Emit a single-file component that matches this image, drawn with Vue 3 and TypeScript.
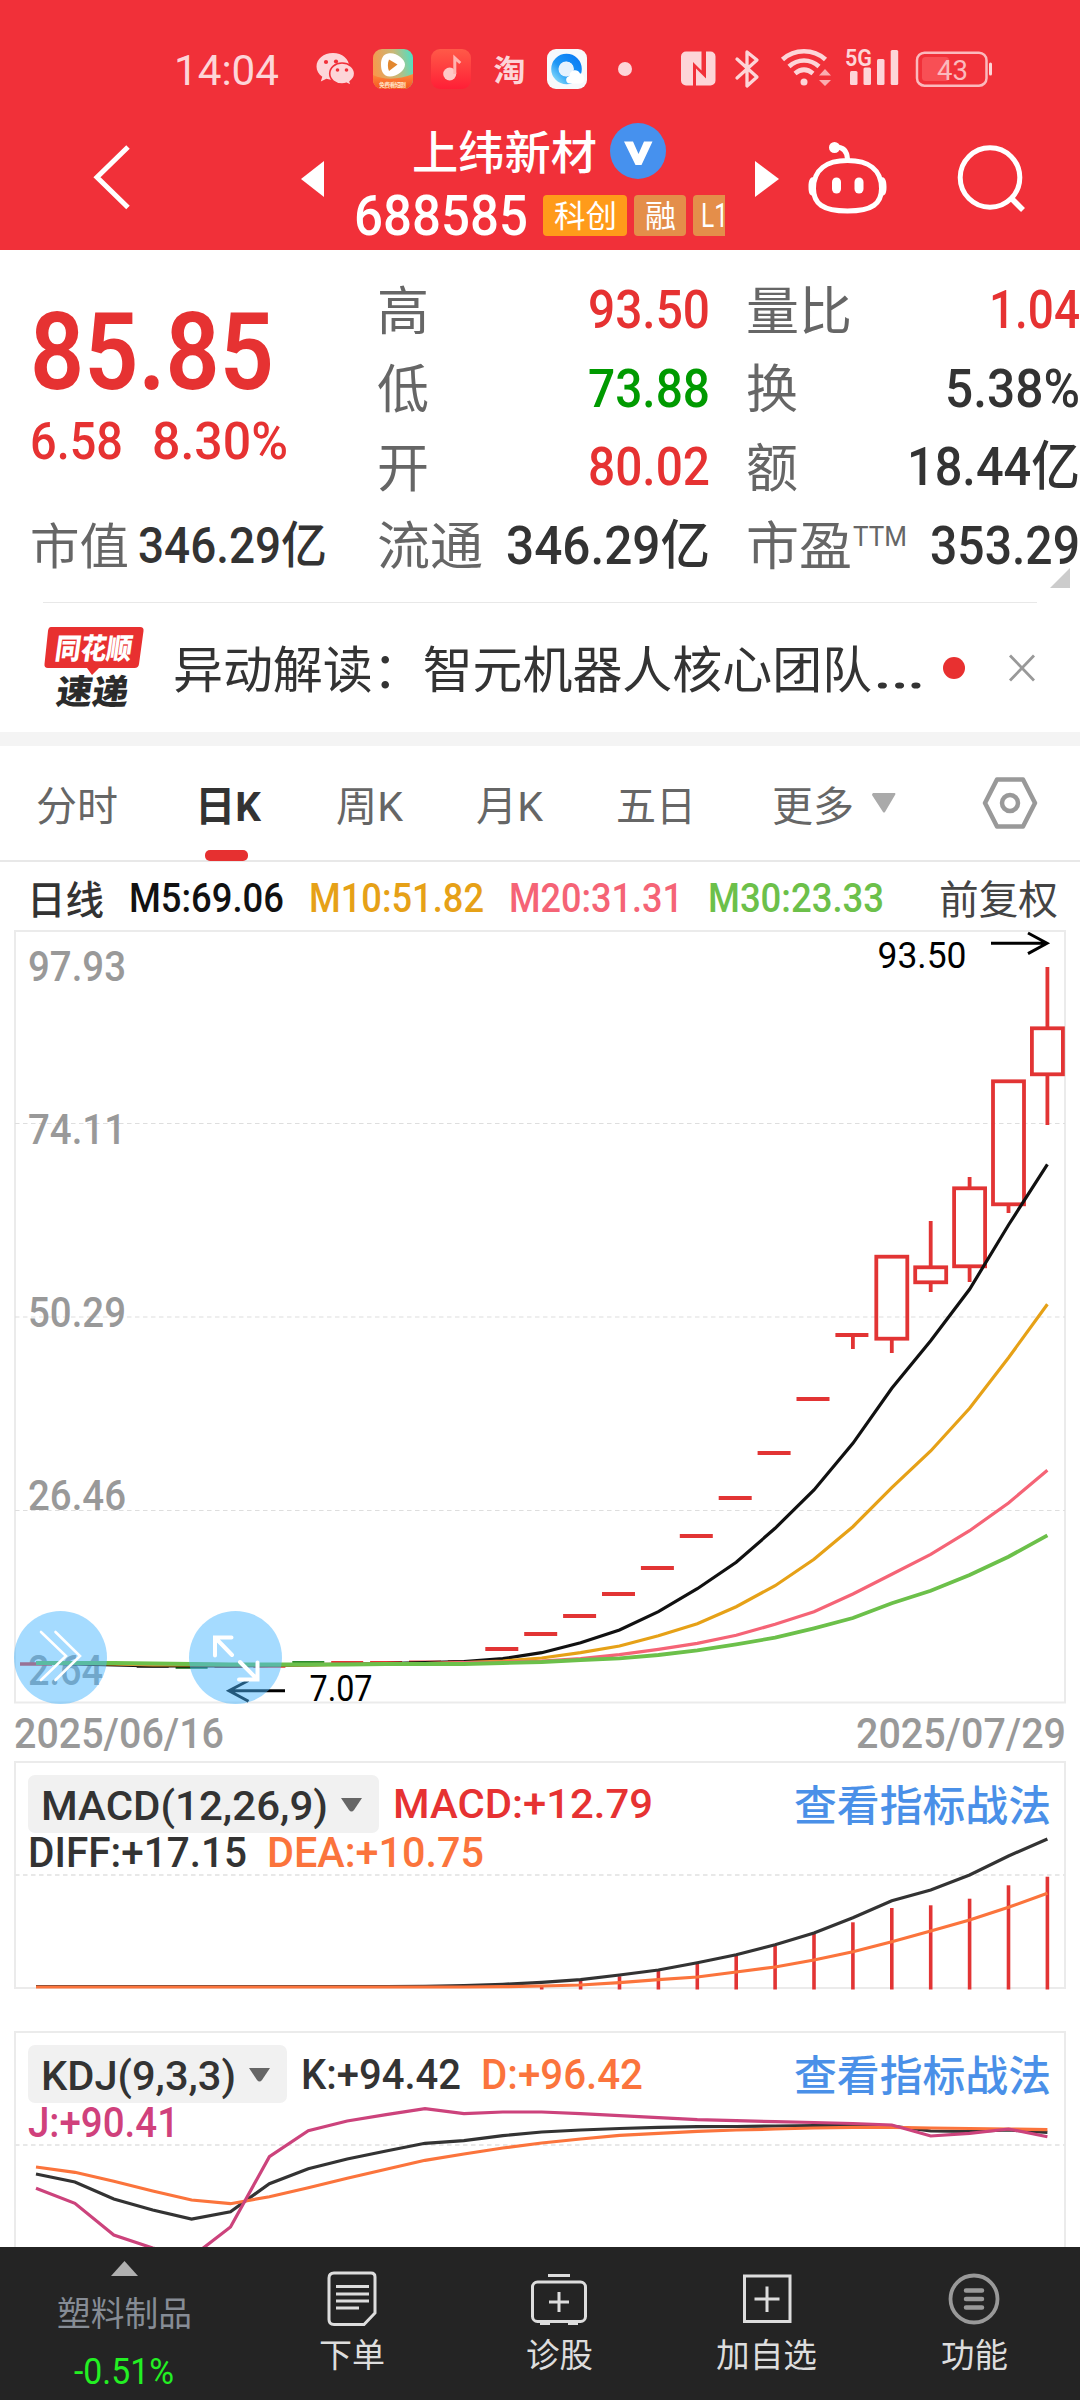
<script setup lang="ts">
import { h } from 'vue'

interface FitProps { t: string; w: number; s: number; c?: string; b?: number }

// Single-line label fitted to an exact advance width; the box is one cap height tall.
// Han glyphs sit slightly above the Latin cap centre, so their baseline drops a little.
const FitText = (p: FitProps) => {
  const cap = Math.round(p.s * 0.71)
  const drop = p.t.charCodeAt(0) > 0x3000 ? p.s * 0.045 : 0
  return h('svg', { width: p.w, height: cap, class: 'fit' }, [
    h('text', {
      x: 0,
      y: cap + drop,
      'font-size': p.s,
      'font-weight': p.b ?? 400,
      fill: p.c ?? '#333',
      textLength: p.w,
      lengthAdjust: 'spacingAndGlyphs',
    }, p.t),
  ])
}
FitText.props = ['t', 'w', 's', 'c', 'b']

const RED = '#e63232'
const DARK = '#333333'
const GRAY = '#666666'

const midStats = [
  { k: '高', v: '93.50', w: 122, c: RED },
  { k: '低', v: '73.88', w: 122, c: '#009a00' },
  { k: '开', v: '80.02', w: 122, c: RED },
]
const rightStats = [
  { k: '量比', kw: 106, v: '1.04', w: 91, c: RED },
  { k: '换', kw: 52, v: '5.38%', w: 135, c: DARK },
  { k: '额', kw: 52, v: '18.44亿', w: 173, c: DARK },
]

const tabs = [
  { t: '分时', w: 82 }, { t: '日K', w: 66, on: true }, { t: '周K', w: 67 },
  { t: '月K', w: 67 }, { t: '五日', w: 80 }, { t: '更多', w: 82 },
]

const averages = [
  { t: 'M5:69.06', w: 155, c: '#111' },
  { t: 'M10:51.82', w: 175, c: '#e6a117' },
  { t: 'M20:31.31', w: 174, c: '#f56476' },
  { t: 'M30:23.33', w: 176, c: '#6cc04a' },
]

const STEP = 38.9
const xAt = (i: number) => 36 + (i - 1) * STEP
const line = (ys: number[], start = 1) =>
  ys.map((y, i) => `${xAt(start + i).toFixed(1)},${y}`).join(' ')

const ma5 = line([1663, 1664, 1665, 1666, 1666, 1666, 1665.5, 1665, 1664, 1663.5, 1662.5, 1661.5, 1658.7, 1652.7, 1642.7, 1630, 1611.7, 1588.7, 1562.3, 1528.3, 1490, 1443.3, 1388.3, 1340.7, 1289.3, 1225, 1164.3])
const ma10 = line([1663, 1663.5, 1664, 1665, 1665, 1665, 1665, 1665, 1664.5, 1664, 1663.5, 1662.5, 1661, 1658, 1652.7, 1646, 1635.7, 1623.7, 1606.7, 1585.7, 1559.3, 1526.7, 1487.7, 1451, 1408.3, 1357.7, 1304.3])
const ma20 = line([1663, 1663, 1663.5, 1664, 1664, 1664.5, 1664.5, 1664.5, 1664, 1664, 1663.5, 1662.5, 1662, 1661, 1658.7, 1654.7, 1649.3, 1643.3, 1635.3, 1624.3, 1611.7, 1594, 1574.3, 1554.3, 1530.7, 1503, 1470.3])
const ma30 = line([1663, 1663, 1663, 1663.5, 1664, 1664.5, 1664.5, 1664.5, 1664.5, 1664, 1664, 1664, 1663, 1662, 1660, 1658.3, 1655, 1650.3, 1644.3, 1637.7, 1628.3, 1618, 1603.3, 1590.7, 1575, 1556.7, 1535.3])

const flats = [
  { i: 1, y: 1664, c: RED }, { i: 4, y: 1666, c: '#222' }, { i: 5, y: 1667, c: '#0d6b10' },
  { i: 6, y: 1666, c: RED }, { i: 7, y: 1666, c: RED }, { i: 8, y: 1662.8, c: '#2c8a2c' },
  { i: 9, y: 1662.8, c: RED }, { i: 10, y: 1662.8, c: RED }, { i: 11, y: 1662.3, c: RED }, { i: 12, y: 1662, c: RED },
]
const dashes = [1649, 1634, 1616, 1594, 1568, 1536, 1498, 1453, 1399, 1335]
const candles = [
  { i: 23, hi: 1256.7, top: 1256.7, bot: 1338.7, lo: 1353 },
  { i: 24, hi: 1221, top: 1267.3, bot: 1282.3, lo: 1292 },
  { i: 25, hi: 1177, top: 1188.3, bot: 1266.3, lo: 1282 },
  { i: 26, hi: 1081.3, top: 1081.3, bot: 1204.3, lo: 1213 },
  { i: 27, hi: 967, top: 1028.3, bot: 1074.3, lo: 1125 },
]
const axis = [
  { t: '97.93', y: 981, w: 98 }, { t: '74.11', y: 1143.5, w: 98 }, { t: '50.29', y: 1326.5, w: 98 },
  { t: '26.46', y: 1509.5, w: 98 }, { t: '2.64', y: 1684.5, w: 75 },
]

const diff = line([1986.5, 1986.5, 1986.5, 1986.5, 1986.5, 1986.5, 1986.5, 1986.5, 1986.5, 1986.5, 1986.3, 1985.5, 1984.3, 1982.3, 1979.7, 1975, 1970, 1962.7, 1954.7, 1944.7, 1933, 1917.7, 1900.7, 1890, 1875, 1856, 1839])
const dea = line([1987, 1987, 1987, 1987, 1987, 1987, 1987, 1987, 1987, 1987, 1987, 1987, 1986.7, 1986, 1985, 1982.7, 1979.7, 1977, 1972, 1967, 1960, 1951.7, 1941.7, 1931, 1920, 1907.3, 1893.3])
const bars = [1985, 1980.7, 1976.3, 1971, 1964, 1956, 1946, 1934, 1922.3, 1908, 1905.3, 1898.7, 1885.3, 1876.7]

const kLine = line([2174, 2182, 2199, 2210, 2219, 2211.7, 2183.7, 2168.7, 2159, 2151, 2143.3, 2140.7, 2135.7, 2132, 2130, 2128.5, 2127.3, 2126.7, 2126.5, 2126, 2125.5, 2125.3, 2126, 2131, 2131.5, 2130, 2132.3])
const dLine = line([2167, 2172.3, 2181.3, 2191, 2200, 2203.7, 2196.7, 2187.7, 2178.3, 2169.3, 2160.3, 2154, 2148, 2143, 2139, 2135.3, 2133.3, 2131.3, 2130, 2129, 2128, 2127.3, 2127.3, 2128, 2128.5, 2129, 2129.7])
const jLine = line([2188.3, 2203.3, 2235, 2248, 2257, 2227, 2156.7, 2130.7, 2121, 2114.7, 2108.7, 2113.7, 2112, 2112, 2113.7, 2115.7, 2117.7, 2119.7, 2120.7, 2121.7, 2122.5, 2123.5, 2125, 2136, 2133.3, 2129, 2136.7])
</script>

<template>
  <div class="page">
    <header>
      <div class="status">
        <FitText t="14:04" :w="105" :s="43" c="#fdd5d8" />
        <svg class="notif" width="330" height="44" viewBox="310 47 330 44">
          <defs>
            <linearGradient id="vid" x1="0" y1="0.4" x2="1" y2="0.2"><stop offset="0" stop-color="#f79a4c" /><stop offset=".55" stop-color="#c8b878" /><stop offset="1" stop-color="#4fe0c4" /></linearGradient>
            <linearGradient id="vidb" x1="0" y1="0" x2="0" y2="1"><stop offset="0" stop-color="#ff8a3c" /><stop offset="1" stop-color="#f4551f" /></linearGradient>
            <linearGradient id="mus" x1="0" y1="0" x2="0" y2="1"><stop offset="0" stop-color="#ff5a48" /><stop offset="1" stop-color="#ff1f36" /></linearGradient>
            <linearGradient id="qb" x1="1" y1="0" x2="0" y2="1"><stop offset="0" stop-color="#0a7cf5" /><stop offset=".6" stop-color="#1e97f5" /><stop offset="1" stop-color="#7fd6fb" /></linearGradient>
          </defs>
          <path fill="#fdd5d8" d="M333 53c-9.500 0-16.500 6-16.500 13.500 0 4.300 2.200 7.900 5.800 10.300l-1.500 4.800 5.600-2.900c2 .6 4.300 1 6.600 1 9.200 0 16.200-6 16.200-13.300C349.200 59 342.200 53 333 53z" />
          <path fill="#fdd5d8" stroke="#f13039" stroke-width="1.600" d="M342 63c-6.900 0-12.300 4.700-12.300 10.600S335.100 84 342 84c1.600 0 3.200-.2 4.600-.7l4.700 2.500-1.200-4.200c2.800-2 4.600-4.800 4.600-8 0-5.900-5.600-10.600-12.700-10.600z" />
          <g fill="#f13039"><circle cx="326" cy="62" r="2.100" /><circle cx="336" cy="61.500" r="2.100" /><circle cx="337.500" cy="70" r="1.800" /><circle cx="346.500" cy="70" r="1.800" /></g>
          <rect x="373" y="49" width="40" height="40" rx="9" fill="url(#vid)" />
          <path d="M373 75c13 6 27 4 40-1v6a9 9 0 0 1-9 9h-22a9 9 0 0 1-9-9z" fill="url(#vidb)" />
          <path d="M388 53.500c7-2 17 5 17 11s-8 12-15 12-9-6-9-12 2-10 7-11z" fill="#fff" />
          <path d="M389 59.500l8.500 5-8.500 6.500c-1.500-3-1.500-8 0-11.500z" fill="#e2872f" />
          <text x="379" y="86.500" font-size="6" font-weight="700" fill="#ffe3c4" textLength="27">免费看短剧</text>
          <rect x="431" y="49" width="40" height="40" rx="9" fill="url(#mus)" />
          <circle cx="449.700" cy="74" r="6.500" fill="#ffc9c6" /><path d="M454.800 74V58l5.500 5" fill="none" stroke="#ffb4b0" stroke-width="3" />
          <text x="493.500" y="80.500" font-size="30" font-weight="700" fill="#fdd5d8" textLength="32" lengthAdjust="spacingAndGlyphs">淘</text>
          <rect x="547" y="49" width="40" height="40" rx="9" fill="#f7f9fc" />
          <circle cx="566.500" cy="69" r="11.300" fill="none" stroke="url(#qb)" stroke-width="8" />
          <circle cx="566" cy="69" r="7.500" fill="#e6f2fe" /><path d="M570 83.500c-5 0-5-7-.5-7.500 0-6 8-8 10.500-2.500 5-.5 7 10 0 10z" fill="#fff" />
          <circle cx="625" cy="69" r="7" fill="#fdd5d8" />
        </svg>
        <svg class="system" width="325" height="44" viewBox="675 47 325 44">
          <g fill="#fdd5d8">
            <path d="M686 51.500h15.500v19l-8.500-8.500v23.500h-7a5 5 0 0 1-5-5V56.500a5 5 0 0 1 5-5zM706 51.500h4.500a5 5 0 0 1 5 5V80.500a5 5 0 0 1-5 5H696v-17l8 8 2 2z" />
            <rect x="850" y="71" width="7.500" height="14" rx="1.500" /><rect x="863.500" y="67.500" width="7.500" height="17.500" rx="1.500" />
            <rect x="877" y="59" width="7.500" height="26" rx="1.500" /><rect x="890.700" y="50" width="7.500" height="35" rx="1.500" />
            <circle cx="804" cy="82" r="3.500" /><path d="M819 75.500l6-6.500 6 6.500zM819 80l6 6 6-6z" opacity=".75" />
            <rect x="989" y="62.500" width="3" height="13" rx="1.500" />
          </g>
          <path d="M737 59l20 18-10 9V52l10 8-20 18" fill="none" stroke="#fdd5d8" stroke-width="3.300" stroke-linejoin="round" stroke-linecap="round" />
          <path d="M782.500 59.500c12-11 31-11 43 0M789 66.500c9-8 21-8 30 0M795 73.500c6-5 12-5 18 0" fill="none" stroke="#fdd5d8" stroke-width="4.600" />
          <text x="845" y="65.500" font-size="24" font-weight="600" fill="#fdd5d8" textLength="27" lengthAdjust="spacingAndGlyphs">5G</text>
          <rect x="917" y="52.700" width="69.500" height="33" rx="7.500" fill="none" stroke="#fbb9bd" stroke-width="2.500" />
          <rect x="922" y="57" width="27" height="24" rx="3.500" fill="#f84f55" />
          <text x="937" y="80" font-size="28" fill="#fbb9bd" textLength="31" lengthAdjust="spacingAndGlyphs">43</text>
        </svg>
      </div>
      <div class="titlebar">
        <svg class="back" width="60" height="139" viewBox="80 110 60 139"><path d="M128 147L97 177.300 128 207.500" fill="none" stroke="#fff" stroke-width="5" /></svg>
        <svg class="prev" width="40" height="139" viewBox="290 110 40 139"><path d="M301 179l23-18v36z" fill="#fff" /></svg>
        <div class="stock">
          <div class="name">
            <FitText t="上纬新材" :w="185" :s="46" c="#fff" :b="500" />
            <svg width="56" height="56" viewBox="0 0 56 56"><circle cx="28" cy="28" r="28" fill="#4691ee" /><path d="M14 18.500h9l5.500 12.500 5.500-12.500h8.500L31.500 42h-6z" fill="#fff" /></svg>
          </div>
          <div class="code">
            <FitText t="688585" :w="174" :s="55" c="#fff" :b="500" />
            <span class="tag main"><FitText t="科创" :w="63" :s="31" c="#fff" /></span>
            <span class="tag"><FitText t="融" :w="31" :s="31" c="#fff" /></span>
            <span class="tag cut"><FitText t="L1" :w="27" :s="34" c="#fff" /></span>
          </div>
        </div>
        <svg class="next" width="35" height="139" viewBox="750 110 35 139"><path d="M779 179l-24-18v36z" fill="#fff" /></svg>
        <svg class="robot" width="85" height="139" viewBox="805 110 85 139">
          <circle cx="834.500" cy="147.500" r="5.500" fill="#fff" />
          <path d="M836 147c7 0 11 4 11.500 12M847.500 160.500c21 0 34 9 34 28 0 15-9 22.500-34 22.500s-34-7.500-34-22.500c0-19 13-28 34-28z" fill="none" stroke="#fff" stroke-width="5" />
          <path d="M814 177c-4 0-5.500 3-5.500 10s1.500 9 6.500 9zM881 177c4 0 5.500 3 5.500 10s-1.500 9-6.500 9z" fill="#fff" />
          <rect x="832" y="177.500" width="9" height="16" rx="4.500" fill="#fff" /><rect x="854.500" y="177.500" width="9" height="16" rx="4.500" fill="#fff" />
        </svg>
        <svg class="search" width="75" height="139" viewBox="955 110 75 139"><circle cx="990" cy="177.500" r="29.800" fill="none" stroke="#fff" stroke-width="5" /><path d="M1011 198l12 12" stroke="#fff" stroke-width="5.500" /></svg>
      </div>
    </header>

    <section class="quote">
      <div class="price">
        <div class="now"><FitText t="85.85" :w="244" :s="108" :c="RED" :b="600" /></div>
        <div class="change">
          <FitText t="6.58" :w="93" :s="52" :c="RED" :b="500" />
          <FitText t="8.30%" :w="136" :s="52" :c="RED" :b="500" />
        </div>
        <div class="cap">
          <FitText t="市值" :w="99" :s="49" :c="GRAY" />
          <FitText t="346.29亿" :w="189" :s="50" :c="DARK" :b="500" />
        </div>
      </div>
      <div class="mid">
        <div v-for="s in midStats" :key="s.k" class="stat">
          <FitText :t="s.k" :w="52" :s="52" :c="GRAY" />
          <FitText :t="s.v" :w="s.w" :s="53" :c="s.c" :b="500" />
        </div>
        <div class="stat">
          <FitText t="流通" :w="106" :s="52" :c="GRAY" />
          <FitText t="346.29亿" :w="204" :s="53" :c="DARK" :b="500" />
        </div>
      </div>
      <div class="right">
        <div v-for="s in rightStats" :key="s.k" class="stat">
          <FitText :t="s.k" :w="s.kw" :s="52" :c="GRAY" />
          <FitText :t="s.v" :w="s.w" :s="53" :c="s.c" :b="500" />
        </div>
        <div class="stat">
          <FitText t="市盈" :w="106" :s="52" :c="GRAY" />
          <FitText class="ttm" t="TTM" :w="54" :s="27" :c="GRAY" />
          <FitText t="353.29" :w="150" :s="53" :c="DARK" :b="500" />
        </div>
      </div>
      <i class="corner"></i>
    </section>

    <section class="news">
      <svg width="102" height="130" viewBox="43 602 102 130">
        <path d="M51 626h89q4 0 3.500 4l-4.500 33q-.5 4-4.500 4H99l-7 7-5-7H48q-4 0-3.500-4l3.500-33q.5-4 3-4z" fill="#e83030" />
        <g font-weight="900">
          <text x="0" y="0" transform="translate(54 658) skewX(-8)" font-size="29" fill="#fff" textLength="77" lengthAdjust="spacingAndGlyphs">同花顺</text>
          <text x="0" y="0" transform="translate(55 702.500) skewX(-8)" font-size="34" fill="#2b2b2b" textLength="72" lengthAdjust="spacingAndGlyphs">速递</text>
        </g>
      </svg>
      <FitText class="headline" t="异动解读：智元机器人核心团队" :w="699" :s="50" :c="DARK" />
      <FitText t="…" :w="54" :s="56" :c="DARK" />
      <i class="dot"></i>
      <svg class="close" width="28" height="28" viewBox="0 0 28 28"><path d="M2 1.500l24 25M26 1.500l-24 25" stroke="#999" stroke-width="2.800" /></svg>
    </section>
    <div class="band"></div>

    <nav class="tabs">
      <div v-for="t in tabs" :key="t.t" class="tab" :class="{ on: t.on }">
        <FitText :t="t.t" :w="t.w" :s="41" :c="t.on ? DARK : GRAY" :b="t.on ? 700 : 400" />
      </div>
      <svg width="24" height="20" viewBox="0 0 24 20"><path d="M1 0h22q1 1 0 2L13 19q-1 1-2 0L0 2q0-1 1-2z" fill="#aaa" /></svg>
      <svg class="gear" width="58" height="56" viewBox="-29 -28 58 56"><path d="M-13-23.500H13L25 0 13 23.500H-13L-25 0z" fill="none" stroke="#999" stroke-width="4.500" stroke-linejoin="round" /><circle r="8" fill="none" stroke="#999" stroke-width="4.500" /></svg>
    </nav>

    <div class="averages">
      <FitText t="日线" :w="77" :s="38.500" :c="DARK" :b="500" />
      <FitText v-for="a in averages" :key="a.t" :t="a.t" :w="a.w" :s="40" :c="a.c" :b="500" />
      <FitText class="adjust" t="前复权" :w="119" :s="39.500" c="#444" />
    </div>

    <svg class="kchart" width="1080" height="775" viewBox="0 930 1080 775">
      <g fill="none" stroke="#ebebeb" stroke-width="2">
        <rect x="15" y="931" width="1050" height="771.500" />
        <path d="M15 1123.500h1050M15 1317h1050M15 1510.500h1050" stroke="#dedede" stroke-width="1.200" stroke-dasharray="4.500 3.500" />
      </g>
      <text v-for="a in axis" :key="a.t" x="28" :y="a.y" font-size="43" font-weight="500" fill="#999" :textLength="a.w" lengthAdjust="spacingAndGlyphs">{{ a.t }}</text>
      <g fill="none" stroke="#e23434" stroke-width="3.800">
        <path v-for="f in flats" :key="f.i" :d="`M${xAt(f.i) - 16} ${f.y}h32`" :stroke="f.c" stroke-width="3.500" />
        <path v-for="(y, i) in dashes" :key="y" :d="`M${xAt(13 + i) - 17.500} ${y}h33`" stroke-width="4" />
        <path :d="`M${xAt(22)} 1335V1349`" />
        <g v-for="c in candles" :key="c.i">
          <rect :x="xAt(c.i) - 15.500" :y="c.top" width="31" :height="c.bot - c.top" />
          <path :d="`M${xAt(c.i)} ${c.hi}V${c.top}M${xAt(c.i)} ${c.bot}V${c.lo}`" />
        </g>
      </g>
      <g fill="none" stroke-width="3.200">
        <polyline :points="ma5" stroke="#111" /><polyline :points="ma10" stroke="#e6a117" />
        <polyline :points="ma20" stroke="#f56476" /><polyline :points="ma30" stroke="#6cc04a" stroke-width="3.800" />
      </g>
      <g fill="none" stroke="#000" stroke-width="3">
        <path d="M991 943.300h55M1028 933l19 10.300-19 10.300M285 1690.700h-56M248.500 1680.500l-19.500 10.200 19.500 10.500" />
      </g>
      <text x="877.500" y="967.500" font-size="37" fill="#000" textLength="89" lengthAdjust="spacingAndGlyphs">93.50</text>
      <text x="309.500" y="1701" font-size="37" fill="#000" textLength="63" lengthAdjust="spacingAndGlyphs">7.07</text>
      <g fill="rgba(71,182,255,.49)"><circle cx="60.500" cy="1657.500" r="46.500" /><circle cx="235.500" cy="1657.500" r="46.500" /></g>
      <g fill="none" stroke="#fff" stroke-linecap="round">
        <path d="M41 1632l25 24-25 24M55.500 1632l24.500 24-24.500 24" stroke-width="2.600" />
        <path d="M231.500 1637.500H215V1655.500M216 1638.500l16 16.500M257.500 1662.500V1679.500H239M256.500 1678.500L240 1662" stroke-width="4" />
      </g>
    </svg>
    <div class="dates">
      <FitText t="2025/06/16" :w="210" :s="43" c="#999" :b="500" />
      <FitText t="2025/07/29" :w="210" :s="43" c="#999" :b="500" />
    </div>

    <section class="panel macd">
      <svg class="plot" width="1080" height="230" viewBox="0 1761 1080 230">
        <rect x="15" y="1762" width="1050" height="226" fill="none" stroke="#ebebeb" stroke-width="2" />
        <path d="M15 1875h1050" stroke="#e8e8e8" stroke-width="2" stroke-dasharray="4.500 3.500" />
        <path v-for="(y, i) in bars" :key="i" :d="`M${xAt(14 + i)} ${y}V1989.500`" stroke="#e23434" stroke-width="3.600" />
        <polyline :points="diff" fill="none" stroke="#333" stroke-width="3.200" /><polyline :points="dea" fill="none" stroke="#fb743c" stroke-width="3.200" />
      </svg>
      <div class="head">
        <span class="pill m"><FitText t="MACD(12,26,9)" :w="287" :s="41" :b="500" /><svg width="21" height="14" viewBox="0 0 21 14"><path d="M0 0h21L13 12q-2.500 3-5 0z" fill="#666" /></svg></span>
        <FitText t="MACD:+12.79" :w="260" :s="41.500" :c="RED" :b="500" />
        <FitText class="link" t="查看指标战法" :w="257" :s="42.500" c="#4a90e8" :b="500" />
      </div>
      <div class="sub">
        <FitText t="DIFF:+17.15" :w="219" :s="42" :b="500" />
        <FitText t="DEA:+10.75" :w="217" :s="42" c="#fb743c" :b="500" />
      </div>
    </section>

    <section class="panel kdj">
      <svg class="plot" width="1080" height="216" viewBox="0 2031 1080 216">
        <rect x="15" y="2032" width="1050" height="226" fill="none" stroke="#ebebeb" stroke-width="2" />
        <path d="M15 2145h1050" stroke="#e8e8e8" stroke-width="2" stroke-dasharray="4.500 3.500" />
        <g fill="none" stroke-width="3.200"><polyline :points="kLine" stroke="#333" /><polyline :points="dLine" stroke="#fb743c" /><polyline :points="jLine" stroke="#cc437c" /></g>
      </svg>
      <div class="head">
        <span class="pill k"><FitText t="KDJ(9,3,3)" :w="195" :s="41" :b="500" /><svg width="21" height="14" viewBox="0 0 21 14"><path d="M0 0h21L13 12q-2.500 3-5 0z" fill="#666" /></svg></span>
        <FitText t="K:+94.42" :w="160" :s="42" :b="500" />
        <FitText class="dval" t="D:+96.42" :w="162" :s="42" c="#fb743c" :b="500" />
        <FitText class="link" t="查看指标战法" :w="257" :s="42.500" c="#4a90e8" :b="500" />
      </div>
      <div class="sub"><FitText t="J:+90.41" :w="151" :s="42" c="#d0417c" :b="500" /></div>
    </section>

    <footer>
      <div class="sector">
        <svg class="up" width="27" height="15" viewBox="0 0 27 15"><path d="M13.500 0L27 15H0z" fill="#b0b0b0" /></svg>
        <FitText t="塑料制品" :w="135" :s="34" c="#868c95" />
        <FitText t="-0.51%" :w="100" :s="36" c="#23f023" />
      </div>
      <div class="item">
        <svg width="60" height="60" viewBox="-30 -30 60 60"><path d="M-18-26h37q4 0 4 4V14L12 25.500H-18q-5 0-5-5V-21q0-5 5-5z" fill="none" stroke="#ddd" stroke-width="3" /><path d="M-16-12.500h33M-16-5h33M-16 2h33M-16 9h23" stroke="#ddd" stroke-width="2.800" /></svg>
        <FitText t="下单" :w="66" :s="33.500" c="#ddd" />
      </div>
      <div class="item">
        <svg width="60" height="60" viewBox="-30 -30 60 60"><rect x="-26.500" y="-17" width="53" height="39.500" rx="5" fill="none" stroke="#ddd" stroke-width="3" /><path d="M-11-23.500h22M-19 24.500h10M9 24.500h10" stroke="#ddd" stroke-width="3.200" /><path d="M-10 3h20M0-7v20" stroke="#ddd" stroke-width="3" /></svg>
        <FitText t="诊股" :w="67" :s="33.500" c="#ddd" />
      </div>
      <div class="item">
        <svg width="60" height="60" viewBox="-30 -30 60 60"><path d="M-22.500-23h45.500V22.500h-45.500zM-12.500 0h25M0-12.500v25.500" fill="none" stroke="#ddd" stroke-width="3" /></svg>
        <FitText t="加自选" :w="101" :s="33.500" c="#ddd" />
      </div>
      <div class="item">
        <svg width="60" height="60" viewBox="-30 -30 60 60"><circle r="23.500" fill="none" stroke="#999" stroke-width="3.800" /><path d="M-8-8.500H8M-8 0H8M-8 8.500H8" stroke="#999" stroke-width="4.500" stroke-linecap="round" /></svg>
        <FitText t="功能" :w="67" :s="33.500" c="#ddd" />
      </div>
    </footer>
  </div>
</template>

<style>
body { background: #fff; }
text { font-family: Roboto, 'Noto Sans CJK SC', sans-serif; }
.fit { overflow: visible; }
</style>

<style scoped>
.page { width: 1080px; height: 2400px; overflow: hidden; background: #fff; font-family: Roboto, 'Noto Sans CJK SC', sans-serif; }
svg { display: block; flex: none; }
header { height: 250px; background: #f13039; }
.status { box-sizing: border-box; height: 110px; padding: 28px 0 0 174px; display: flex; align-items: center; }
.status svg { overflow: visible; }
.notif { margin-left: 31px; }
.system { margin-left: 35px; }
.titlebar { height: 139px; display: flex; }
.back { margin-left: 80px; }
.prev { margin-left: 150px; }
.stock { width: 395px; overflow: hidden; }
.name { height: 81px; padding-left: 82px; display: flex; align-items: center; gap: 13px; }
.code { height: 48px; padding-left: 24px; display: flex; align-items: center; }
.tag { flex: none; height: 41px; width: 52px; margin-left: 7px; border-radius: 4px; background: #e48e4a; display: flex; align-items: center; justify-content: center; }
.tag.main { width: 84px; margin-left: 15px; background: #ff9b1a; }
.tag.cut { box-sizing: border-box; width: 58px; padding-left: 8px; justify-content: flex-start; }
.next { margin-left: 25px; }
.robot { margin-left: 20px; }
.search { margin-left: 65px; }

.quote { position: relative; box-sizing: border-box; height: 352px; padding-top: 20px; display: flex; }
.price { box-sizing: border-box; width: 377px; padding-left: 30px; }
.now { height: 160px; display: flex; align-items: center; }
.change { height: 20px; display: flex; align-items: center; gap: 29px; }
.cap { height: 78.5px; margin-top: 55.5px; display: flex; align-items: center; gap: 9px; }
.mid { width: 333px; }
.right { width: 334px; margin-left: 36px; }
.stat { height: 78.5px; display: flex; align-items: center; justify-content: space-between; }
.ttm { margin: 0 auto 16px 1px; }
.corner { position: absolute; left: 1050px; top: 318px; border-left: 20px solid transparent; border-bottom: 20px solid #ccc; }

.news { height: 129px; margin: 0 43px; border-top: 1px solid #e8e8e8; display: flex; align-items: center; }
.headline { margin-left: 28px; }
.dot { width: 22px; height: 22px; margin-left: 17px; border-radius: 50%; background: #e83030; }
.close { margin-left: 43px; }
.band { height: 14px; background: #f4f4f4; }

.tabs { box-sizing: border-box; height: 116px; padding-left: 36px; border-bottom: 2px solid #e8e8e8; display: grid; grid-template-columns: 159px 141px 140px 140px 156px 100px 24px 1fr; align-items: center; }
.tab { position: relative; box-sizing: border-box; height: 114px; padding-top: 3px; display: flex; align-items: center; }
.tab.on::after { content: ''; position: absolute; left: 10px; bottom: -1px; width: 43px; height: 11px; border-radius: 5px; background: #e63030; }
.gear { margin-left: 85px; }

.averages { box-sizing: border-box; height: 68px; padding: 4px 22px 0 27px; display: flex; align-items: center; gap: 25px; }
.adjust { margin-left: auto; }
.dates { box-sizing: border-box; height: 56px; padding: 0 14px 2px; display: flex; align-items: center; justify-content: space-between; }

.panel { position: relative; box-sizing: border-box; padding: 14px 29px 0 28px; }
.macd { height: 228px; }
.kdj { height: 216px; margin-top: 42px; }
.plot { position: absolute; left: 0; top: 0; }
.head { position: relative; height: 57.5px; display: flex; align-items: center; }
.pill { box-sizing: border-box; height: 57.5px; padding: 3px 0 0 13px; margin-right: 14px; border-radius: 7px; background: #f1f1f1; display: flex; align-items: center; gap: 13px; }
.pill.m { width: 351px; }
.pill.k { width: 259px; }
.dval { margin-left: 20px; }
.link { margin-left: auto; }
.sub { position: relative; height: 39px; display: flex; align-items: center; gap: 20px; }

footer { height: 153px; background: #242424; display: flex; }
.sector { width: 248px; display: flex; flex-direction: column; align-items: center; gap: 34px; }
.up { margin: 14px 0 -10px; }
.item { width: 207.5px; padding-top: 22px; display: flex; flex-direction: column; align-items: center; gap: 12px; }
</style>
